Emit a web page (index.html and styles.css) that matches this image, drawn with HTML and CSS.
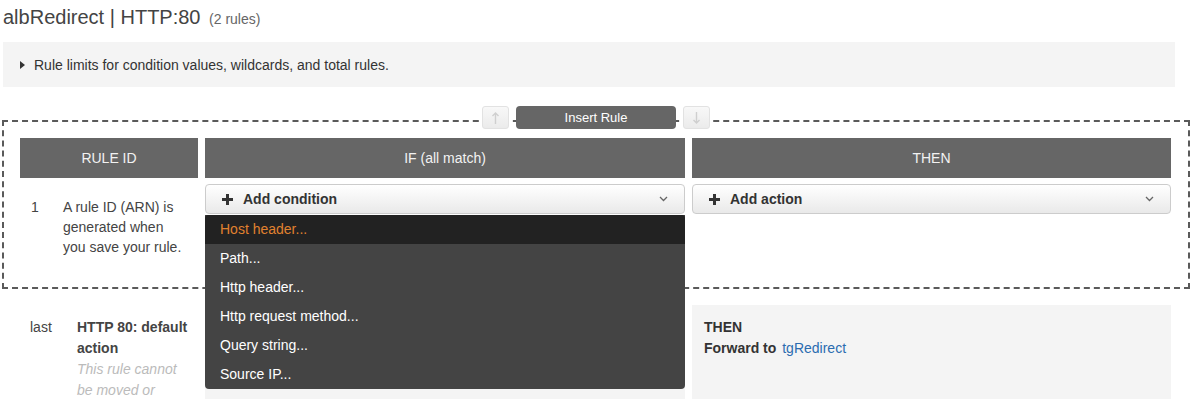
FILE: index.html
```html
<!DOCTYPE html>
<html lang="en">
<head>
  <meta charset="UTF-8">
  <title>albRedirect | HTTP:80</title>
  <link rel="stylesheet" href="styles.css">
</head>
<body>

  <h1 class="title">albRedirect | HTTP:80 <span class="count">(2 rules)</span></h1>

  <div class="info">
    <span class="caret"></span>
    <span>Rule limits for condition values, wildcards, and total rules.</span>
  </div>

  <div class="edit-box">
    <div class="insert-bar">
      <button class="move-btn">
        <svg width="9" height="14" viewBox="0 0 9 14"><path d="M4.5 2 V13 M1.5 5 L4.5 2 L7.5 5" fill="none" stroke="#cfcfcf" stroke-width="1.4"/></svg>
      </button>
      <button class="insert-btn">Insert Rule</button>
      <button class="move-btn">
        <svg width="9" height="14" viewBox="0 0 9 14"><path d="M4.5 1 V12 M1.5 9 L4.5 12 L7.5 9" fill="none" stroke="#cfcfcf" stroke-width="1.4"/></svg>
      </button>
    </div>

    <div class="rule-grid">
      <div class="head">RULE ID</div>
      <div class="head">IF (all match)</div>
      <div class="head">THEN</div>

      <div class="rule-id">
        <span class="num">1</span>
        <span class="id-text">A rule ID (ARN) is generated when you save your rule.</span>
      </div>

      <div class="picker">
        <div class="select">
          <svg class="plus" width="11" height="11" viewBox="0 0 11 11"><rect x="4" y="0" width="3" height="11" fill="#333"/><rect x="0" y="4" width="11" height="3" fill="#333"/></svg>
          <span class="select-label">Add condition</span>
          <svg class="chev" width="9" height="6" viewBox="0 0 9 6"><polyline points="1,1 4.5,4.5 8,1" fill="none" stroke="#666" stroke-width="1.3"/></svg>
        </div>
        <ul class="menu">
          <li class="active">Host header...</li>
          <li>Path...</li>
          <li>Http header...</li>
          <li>Http request method...</li>
          <li>Query string...</li>
          <li>Source IP...</li>
        </ul>
      </div>

      <div class="picker">
        <div class="select">
          <svg class="plus" width="11" height="11" viewBox="0 0 11 11"><rect x="4" y="0" width="3" height="11" fill="#333"/><rect x="0" y="4" width="11" height="3" fill="#333"/></svg>
          <span class="select-label">Add action</span>
          <svg class="chev" width="9" height="6" viewBox="0 0 9 6"><polyline points="1,1 4.5,4.5 8,1" fill="none" stroke="#666" stroke-width="1.3"/></svg>
        </div>
      </div>
    </div>
  </div>

  <div class="rule-grid default-rule">
    <div class="rule-id last">
      <span class="num">last</span>
      <div class="id-text">
        <strong>HTTP 80: default action</strong>
        <em class="note">This rule cannot be moved or deleted.</em>
      </div>
    </div>
    <div class="panel"></div>
    <div class="panel">
      <strong>THEN</strong><br>
      <strong>Forward to</strong> <a href="#" class="link">tgRedirect</a>
    </div>
  </div>

</body>
</html>
```

FILE: styles.css
```css
body {
  margin: 0;
  font-family: "Liberation Sans", Arial, sans-serif;
  font-size: 14px;
  color: #444;
  background: #fff;
}

.title {
  margin: 5px 0 0 3px;
  font-size: 20px;
  line-height: 24px;
  font-weight: normal;
  color: #444;
}

.count {
  font-size: 14px;
  line-height: 1;
  color: #666;
  margin-left: 3px;
}

.info {
  margin: 13px 0 0 3px;
  width: 1172px;
  height: 45px;
  box-sizing: border-box;
  padding-left: 17px;
  background: #f4f4f4;
  display: flex;
  align-items: center;
  gap: 9px;
  color: #333;
}

.caret {
  width: 0;
  height: 0;
  border-left: 5px solid #333;
  border-top: 4px solid transparent;
  border-bottom: 4px solid transparent;
}

.edit-box {
  position: relative;
  margin: 33px 0 0 2px;
  width: 1188px;
  box-sizing: border-box;
  border: 2px dashed #5a5a5a;
  padding: 16px 16px 30px 16px;
}

.insert-bar {
  position: absolute;
  top: -16px;
  left: 50%;
  transform: translateX(-50%);
  display: flex;
  gap: 7px;
}

.move-btn {
  width: 27px;
  height: 23px;
  padding: 0;
  border: 1px solid #e2e2e2;
  border-radius: 3px;
  background: linear-gradient(#f8f8f8, #ebebeb);
  display: flex;
  align-items: center;
  justify-content: center;
}

.insert-btn {
  width: 160px;
  height: 23px;
  padding: 0;
  border: none;
  border-radius: 4px;
  background: #666;
  color: #fff;
  font-family: "Liberation Sans", Arial, sans-serif;
  font-size: 13px;
}

.rule-grid {
  display: grid;
  grid-template-columns: 178px 480px 479px;
  column-gap: 7px;
  row-gap: 6px;
}

.head {
  height: 40px;
  background: #666;
  color: #f2f2f2;
  font-size: 14px;
  display: flex;
  align-items: center;
  justify-content: center;
}

.rule-id {
  display: flex;
  padding: 13px 0 0 11px;
  line-height: 20px;
}

.num {
  width: 32px;
  flex-shrink: 0;
}

.id-text {
  width: 124px;
}

.picker {
  position: relative;
}

.select {
  height: 30px;
  box-sizing: border-box;
  border: 1px solid #ccc;
  border-radius: 4px;
  background: linear-gradient(#fff, #e9e9e9);
  display: flex;
  align-items: center;
  padding: 0 16px 0 16px;
}

.plus {
  margin-right: 10px;
}

.select-label {
  font-weight: bold;
  color: #333;
  flex: 1;
}

.menu {
  position: absolute;
  top: 31px;
  left: 0;
  right: 0;
  margin: 0;
  padding: 0;
  list-style: none;
  background: #444;
  border-radius: 0 0 4px 4px;
  z-index: 2;
}

.menu li {
  height: 29px;
  line-height: 29px;
  padding: 0 15px;
  color: #fff;
}

.menu li.active {
  background: #222;
  color: #e0812f;
  border-radius: 3px 3px 0 0;
}

.default-rule {
  margin: 16px 0 0 20px;
}

.rule-id.last {
  padding: 12px 0 0 10px;
  line-height: 21px;
}

.rule-id.last .num {
  width: 47px;
}

.rule-id.last .id-text {
  width: 112px;
}

.note {
  display: block;
  color: #bbb;
}

.panel {
  background: #f4f4f4;
  min-height: 120px;
  padding: 12px 12px;
  line-height: 21px;
  color: #333;
}

.link {
  color: #2b6cb0;
  text-decoration: none;
  margin-left: 2px;
}
```
